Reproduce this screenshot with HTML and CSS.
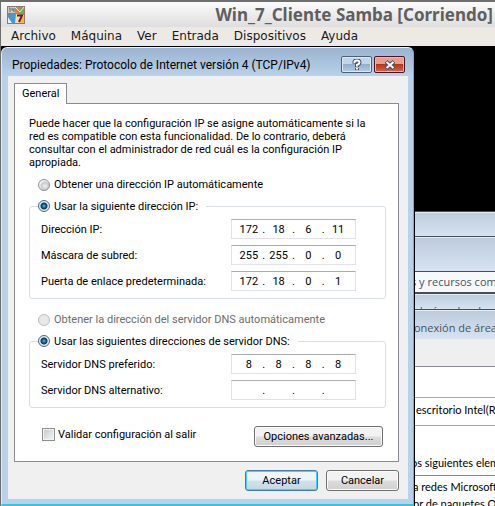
FILE: index.html
```html
<!DOCTYPE html>
<html lang="es">
<head>
<meta charset="utf-8">
<title>Win_7_Cliente Samba [Corriendo]</title>
<link rel="stylesheet" href="styles.css">
</head>
<body>
<div class="vm">
  <header class="vm-title">
    <svg class="vm-icon" viewBox="0 0 18 18" aria-hidden="true">
      <rect width="18" height="18" fill="#8d7a70"/>
      <path d="M1 1h7v6H1z" fill="#c9c9c4"/>
      <path d="M2 2h1v4M5 2v2h2M7 2v4" fill="none" stroke="#6b6b68"/>
      <path d="M8 1l9 0v8l-4-2-5 2z" fill="#e8794a"/>
      <path d="M12 1h5v8l-4-1z" fill="#66b04a"/>
      <path d="M8 1l5 5 4-5" fill="none" stroke="#ffe2bd"/>
      <path d="M1 9c3-2 5-2 8 0l-1 8H5z" fill="#3d9be4"/>
      <path d="M1 11v6h4z" fill="#eceff2"/>
      <path d="M9 8l8 1v8H8z" fill="#f3dfa6"/>
      <path d="M14 11l3-1v7h-4z" fill="#f0b941"/>
      <path d="M10 9.500h5l-3 6.500" fill="none" stroke="#7c1527" stroke-width="2"/>
    </svg>
    <h1>Win_7_Cliente Samba [Corriendo]</h1>
  </header>
  <nav class="vm-menu">
    <button type="button">Archivo</button>
    <button type="button">Máquina</button>
    <button type="button">Ver</button>
    <button type="button">Entrada</button>
    <button type="button">Dispositivos</button>
    <button type="button">Ayuda</button>
  </nav>
  <main class="screen">
    <div class="backdrop">
      <div class="glass glass-a"></div>
      <div class="glass glass-b"></div>
      <div class="address">s y recursos com</div>
      <div class="glass glass-c">de área local</div>
      <div class="glass glass-d">onexión de área</div>
      <div class="sheet-top"></div>
      <div class="adapter-label"></div>
      <div class="adapter">escritorio Intel(R)</div>
      <div class="uses">os siguientes elem</div>
      <ul class="items">
        <li>a redes Microsoft</li>
        <li>or de paquetes Qo</li>
      </ul>
    </div>

    <form class="dialog">
      <div class="dialog-title">
        <h2>Propiedades: Protocolo de Internet versión 4 (TCP/IPv4)</h2>
        <button type="button" class="cap" aria-label="Ayuda">
          <svg viewBox="0 0 12 12" aria-hidden="true">
            <path class="rim" d="M3.500 4.500V3q0-1.500 2.500-1.500T8.500 3.500Q8.500 5 6 6v2M6 9v2"/>
            <path class="core" d="M3.500 4V3q0-1.500 2.500-1.500T8.500 3.500Q8.500 5 6 6v1.500M6 9v1.500"/>
          </svg>
        </button>
        <button type="button" class="cap cap-close" aria-label="Cerrar">
          <svg viewBox="0 0 12 12" aria-hidden="true">
            <path class="rim" d="M2 2.500l8 7M10 2.500l-8 7"/>
            <path class="core" d="M2.500 3l7 6M9.500 3l-7 6"/>
          </svg>
        </button>
      </div>
      <div class="dialog-body">
        <div class="tabs"><button type="button" class="tab">General</button></div>
        <section class="panel">
          <p>Puede hacer que la configuración IP se asigne automáticamente si la red es compatible con esta funcionalidad. De lo contrario, deberá consultar con el administrador de red cuál es la configuración IP apropiada.</p>
          <label class="choice"><input type="radio" name="ip">Obtener una dirección IP automáticamente</label>
          <fieldset>
            <legend><label class="choice"><input type="radio" name="ip" checked>Usar la siguiente dirección IP:</label></legend>
            <div class="row">
              <label for="ip1">Dirección IP:</label>
              <div class="octets"><input id="ip1" value="172"><i>.</i><input aria-label="Dirección IP 2" value="18"><i>.</i><input aria-label="Dirección IP 3" value="6"><i>.</i><input aria-label="Dirección IP 4" value="11"></div>
            </div>
            <div class="row">
              <label for="mask1">Máscara de subred:</label>
              <div class="octets"><input id="mask1" value="255"><i>.</i><input aria-label="Máscara 2" value="255"><i>.</i><input aria-label="Máscara 3" value="0"><i>.</i><input aria-label="Máscara 4" value="0"></div>
            </div>
            <div class="row">
              <label for="gate1">Puerta de enlace predeterminada:</label>
              <div class="octets"><input id="gate1" value="172"><i>.</i><input aria-label="Puerta 2" value="18"><i>.</i><input aria-label="Puerta 3" value="0"><i>.</i><input aria-label="Puerta 4" value="1"></div>
            </div>
          </fieldset>
          <label class="choice choice-off"><input type="radio" name="dns" disabled>Obtener la dirección del servidor DNS automáticamente</label>
          <fieldset>
            <legend><label class="choice"><input type="radio" name="dns" checked>Usar las siguientes direcciones de servidor DNS:</label></legend>
            <div class="row">
              <label for="dns1">Servidor DNS preferido:</label>
              <div class="octets"><input id="dns1" value="8"><i>.</i><input aria-label="Preferido 2" value="8"><i>.</i><input aria-label="Preferido 3" value="8"><i>.</i><input aria-label="Preferido 4" value="8"></div>
            </div>
            <div class="row">
              <label for="alt1">Servidor DNS alternativo:</label>
              <div class="octets"><input id="alt1"><i>.</i><input aria-label="Alternativo 2"><i>.</i><input aria-label="Alternativo 3"><i>.</i><input aria-label="Alternativo 4"></div>
            </div>
          </fieldset>
          <div class="panel-foot">
            <label class="check"><input type="checkbox">Validar configuración al salir</label>
            <button type="button" class="btn btn-wide">Opciones avanzadas...</button>
          </div>
        </section>
        <div class="actions">
          <button type="button" class="btn btn-default">Aceptar</button>
          <button type="button" class="btn">Cancelar</button>
        </div>
      </div>
    </form>
  </main>
</div>
</body>
</html>
```
FILE: styles.css
```css
* { box-sizing: border-box; }

body {
  margin: 0;
  font: 11px/13px Roboto, sans-serif;
  color: #000;
}

button, input { font: inherit; color: inherit; margin: 0; padding: 0; }
h1, h2, p, ul { margin: 0; padding: 0; }

.vm {
  display: flex;
  flex-direction: column;
  min-height: 100vh;
  overflow: hidden;
  border-top: 2px solid #6e6e6e;
  border-left: 1px solid #6e6e6e;
}

.vm-title {
  display: flex;
  align-items: center;
  justify-content: space-between;
  height: 25px;
  padding: 0 2px 0 6px;
  background: linear-gradient(#fbfbfb, #dedede);
}
.vm-icon { width: 18px; height: 18px; }
.vm-title h1 {
  font: bold 17px/22px "Noto Sans", sans-serif;
  color: #5f5f5f;
  white-space: nowrap;
}

.vm-menu {
  display: flex;
  gap: 15px;
  height: 19px;
  padding-left: 10px;
  background: #edeae6;
  font: 12px/17px "DejaVu Sans", sans-serif;
  color: #1a1a1a;
}
.vm-menu button { border: 0; background: none; }

.screen {
  position: relative;
  flex: 1;
  min-height: 460px;
  background: #000;
}

/* Windows that lie behind the dialog */
.backdrop {
  display: flex;
  flex-direction: column;
  height: 460px;
  padding: 165px 0 0 405px;
  overflow: hidden;
  white-space: nowrap;
  font: 11px/14px Lato, "Liberation Sans", sans-serif;
  background: #000;
}
.backdrop > * { flex-shrink: 0; }
.glass {
  border-top: 1px solid #4a4e52;
  background: linear-gradient(#bccbdb, #d6e3f1);
  box-shadow: inset 0 1px #e3ebf3;
  color: #47535f;
  font: 11px/16px "Open Sans", sans-serif;
  overflow: hidden;
}
.glass-a { height: 25px; }
.glass-b { height: 35px; }
.glass-c { height: 16px; padding: 9px 0 0 10px; }
.glass-d { height: 30px; padding: 10px 0 0 8px; }
.address {
  height: 22px;
  padding: 1px 0 0 5px;
  border-top: 1px solid #4a4e52;
  border-bottom: 1px solid #4a4e52;
  background: #f6f9fc;
  color: #47535f;
  font: 11px/18px "Open Sans", sans-serif;
}
.sheet-top { height: 28px; background: #efefef; border-bottom: 1px solid #898c95; }
.adapter-label { height: 30px; background: #fff; }
.adapter {
  height: 29px;
  padding: 5px 0 0 10px;
  border: solid #a6a6a6;
  border-width: 1px 0;
  background: #fff;
}
.uses { height: 49px; padding: 30px 0 0 5px; background: #fff; }
.backdrop .items {
  flex: 1 0 auto;
  padding: 2px 0 0 7px;
  border-top: 1px solid #828790;
  background: #fff;
  list-style: none;
  line-height: 17px;
}

/* Properties dialog */
.dialog {
  position: absolute;
  top: 1px;
  left: 0;
  width: 413px;
  padding: 0 5px 5px 6px;
  border: solid #35c5e0;
  border-width: 1px 1px 2px 1px;
  border-top-color: #e8f3fb;
  border-left-color: #dfeaf5;
  border-radius: 6px 6px 0 0;
  background: linear-gradient(#9ab4d1, #b9d1ea 28px);
  box-shadow: 1px 0 #000;
}
.dialog-title { display: flex; height: 28px; padding: 8px 3px 0 4px; }
.dialog-title h2 {
  flex: 1;
  padding-top: 2px;
  font: 12px/14px Roboto, sans-serif;
  white-space: nowrap;
}
.cap {
  display: grid;
  place-items: center;
  width: 31px;
  height: 17px;
  margin-left: 2px;
  border: 1px solid #4d6079;
  border-radius: 2px;
  background: linear-gradient(#c3d5e9 45%, #94aeca 50%, #b4cde6);
  box-shadow: inset 0 0 0 1px #dce8f4;
}
.cap-close {
  border-color: #4c1420;
  background: linear-gradient(#e3a091 45%, #b8341c 50%, #d2694f);
  box-shadow: inset 0 0 0 1px #eeb8ac;
}
.cap svg { width: 12px; height: 12px; fill: none; }
.rim { stroke: #4d5264; stroke-width: 4; }
.core { stroke: #fff; stroke-width: 2; }

.dialog-body { padding: 7px 9px 8px 6px; background: #f0f0f0; }
.tabs { display: flex; height: 20px; }
.tab {
  height: 21px;
  padding: 0 7px 2px;
  border: 1px solid #898c95;
  border-bottom: 0;
  background: #fff;
  position: relative;
}
.panel {
  padding: 13px 12px 14px 14px;
  border: 1px solid #898c95;
  background: #fff;
}
.panel p { padding-right: 16px; }

.choice { display: flex; align-items: center; gap: 4px; white-space: nowrap; }
.panel > .choice { padding-left: 9px; margin-top: 9px; }
.choice-off { color: #6d6d6d; }
.choice input {
  appearance: none;
  width: 12px;
  height: 12px;
  border: 1px solid #8e8f8f;
  border-radius: 50%;
  background: radial-gradient(circle at 60% 60%, #f0f0f0, #c4c8cc 4px, #f4f4f4 5px);
}
.choice input:checked {
  border-color: #50667a;
  background: radial-gradient(circle at 50% 50%, #7fd8f4 0, #1c86b4 1px, #0c3858 3px, #e0eff7 4px);
}
.choice input:disabled { border-color: #bcbcbc; background: #e8e8e8; }

fieldset {
  min-width: 0;
  margin: 8px 0 0;
  padding: 6px 29px 7px 11px;
  border: 1px solid #d5dfe5;
  border-radius: 3px;
}
.panel > fieldset + .choice { margin-top: 14px; }
legend { padding: 0 8px 0 0; margin-left: -3px; }
legend .choice { height: 14px; }
.row { display: flex; align-items: center; justify-content: space-between; }
.row + .row { margin-top: 6px; }
.octets {
  display: flex;
  align-items: center;
  width: 125px;
  height: 20px;
  padding: 0 4px;
  border: 1px solid #e2e3ea;
  border-top-color: #abadb3;
}
.octets input {
  flex: 1;
  min-width: 0;
  border: 0;
  outline: 0;
  background: none;
  text-align: center;
}
.octets i { width: 4px; font-style: normal; text-align: center; }

.panel-foot {
  display: flex;
  align-items: center;
  justify-content: space-between;
  margin-top: 18px;
  padding: 0 3px 0 13px;
}
.check { display: flex; align-items: center; gap: 3px; padding-bottom: 4px; }
.check input {
  appearance: none;
  width: 13px;
  height: 13px;
  border: 1px solid #8e8f8f;
  background: linear-gradient(135deg, #c4c8cc, #f6f6f6);
  box-shadow: inset 0 0 0 1px #f4f4f4;
}

.btn {
  width: 73px;
  height: 21px;
  border: 1px solid #707070;
  border-radius: 3px;
  background: linear-gradient(#f2f2f2 48%, #dddddd 52%, #cfcfcf);
  box-shadow: inset 0 0 0 1px #fafafa;
}
.btn-wide { width: 129px; }
.btn-default {
  border-color: #3c7fb1;
  background: linear-gradient(#eef4f7 48%, #d3e2ea 52%, #c2d8e3);
  box-shadow: inset 0 0 0 1px #46d0f5;
}
.actions { display: flex; justify-content: flex-end; gap: 8px; margin-top: 8px; }
```
